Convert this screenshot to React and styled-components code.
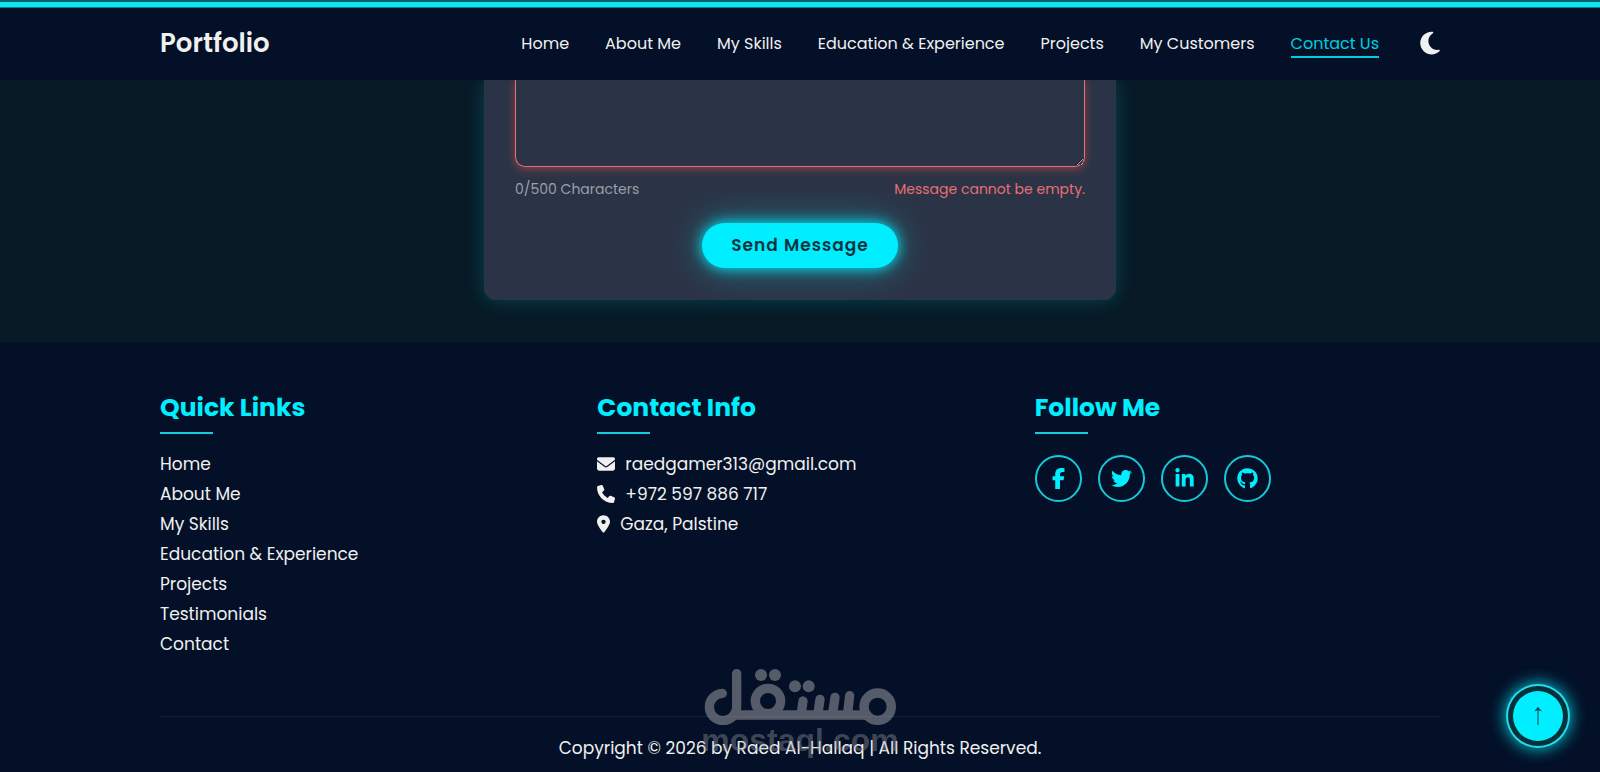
import React, { useState } from 'react'
import styled, { createGlobalStyle, ThemeProvider } from 'styled-components'
import {
  FaEnvelope,
  FaFacebookF,
  FaGithub,
  FaLinkedinIn,
  FaLocationDot,
  FaMoon,
  FaPhone,
  FaTwitter,
} from 'react-icons/fa6'

const theme = {
  primary: '#00eeff',
  bgColor: '#031027',
  sectionColor: '#081a26',
  cardColor: '#2b3446',
  textColor: '#f0f0f0',
  errorColor: '#e86f74',
}

const GlobalStyle = createGlobalStyle`
  * {
    box-sizing: border-box;
  }
  body {
    margin: 0;
    background: ${theme.bgColor};
    color: ${theme.textColor};
    font-family: Poppins, Inter, 'Noto Sans', sans-serif;
  }
  a {
    color: inherit;
    text-decoration: none;
  }
  ul {
    list-style: none;
    margin: 0;
    padding: 0;
  }
`

const Page = styled.div`
  min-height: 100vh;
  display: flex;
  flex-direction: column;
`

const Progress = styled.div`
  position: fixed;
  z-index: 20;
  top: 0;
  left: 0;
  width: 100%;
  height: 8px;
  background: #12e3f2;
  border-top: 2px solid #06616c;
  border-bottom: 1px solid #0a7f8e;
`

const Container = styled.div`
  width: 80%;
  margin: 0 auto;
`

const Header = styled.header`
  position: sticky;
  z-index: 12;
  top: 0;
  padding-top: 6px;
  background: ${props => props.theme.bgColor};
`

const Bar = styled(Container)`
  height: 74px;
  display: flex;
  align-items: center;
  justify-content: space-between;
`

const Logo = styled.a`
  font-size: 26px;
  line-height: 36px;
  font-weight: 600;
`

const Nav = styled.nav`
  display: flex;
  align-items: center;
  gap: 36px;
`

const NavLink = styled.a`
  padding-top: 4px;
  font-size: 16px;
  line-height: 24px;
  border-bottom: 2px solid
    ${props => (props.$active ? props.theme.primary : 'transparent')};
  color: ${props => (props.$active ? props.theme.primary : 'inherit')};
  opacity: ${props => (props.$active ? 0.85 : 1)};
  white-space: nowrap;
`

const ThemeButton = styled.button`
  display: flex;
  margin-left: 5px;
  padding: 0;
  border: 0;
  background: none;
  color: ${props => props.theme.textColor};
  cursor: pointer;
  svg {
    width: 20px;
    height: 26px;
  }
`

const ContactSection = styled.section`
  display: flex;
  justify-content: center;
  padding-bottom: 42px;
  background: ${props => props.theme.sectionColor};
`

const Form = styled.form`
  width: 100%;
  max-width: 632px;
  display: flex;
  flex-direction: column;
  align-items: center;
  padding: 0 31px 32px;
  border-radius: 0 0 12px 12px;
  background: ${props => props.theme.cardColor};
  box-shadow: 0 0 20px rgba(0, 238, 255, 0.2);
`

const Message = styled.textarea`
  display: block;
  width: 100%;
  height: 87px;
  padding: 12px;
  border: 1px solid ${props => props.theme.errorColor};
  border-top: 0;
  border-radius: 0 0 10px 10px;
  outline: none;
  resize: vertical;
  background: transparent;
  color: inherit;
  font: inherit;
  box-shadow: 0 2px 8px rgba(232, 80, 80, 0.5);
`

const FieldInfo = styled.div`
  width: 100%;
  display: flex;
  justify-content: space-between;
  padding: 10px 0 22px;
  font-size: 14px;
  line-height: 24px;
`

const Counter = styled.span`
  color: #9b9fa7;
`

const ErrorText = styled.span`
  color: ${props => props.theme.errorColor};
`

const SendButton = styled.button`
  height: 45px;
  padding: 0 29px 2px;
  border: 0;
  border-radius: 23px;
  background: ${props => props.theme.primary};
  color: #0b3440;
  font: inherit;
  font-size: 17px;
  font-weight: 600;
  letter-spacing: 1px;
  box-shadow: 0 0 14px ${props => props.theme.primary},
    0 0 36px rgba(0, 238, 255, 0.4);
  cursor: pointer;
`

const Footer = styled.footer`
  flex: 1;
  padding: 48px 0 8px;
`

const Columns = styled(Container)`
  display: grid;
  grid-template-columns: repeat(3, 1fr);
  gap: 32px;
  padding-bottom: 57px;
`

const Title = styled.h3`
  margin: 0 0 15px;
  color: ${props => props.theme.primary};
  font-size: 25px;
  line-height: 36px;
  font-weight: 700;
  &::after {
    content: '';
    display: block;
    width: 53px;
    height: 2px;
    margin-top: 6px;
    background: #12cfe0;
  }
`

const Item = styled.li`
  display: flex;
  align-items: center;
  gap: 10px;
  font-size: 17px;
  line-height: 30px;
  svg {
    width: ${props => (props.$narrow ? '13px' : '18px')};
    height: 18px;
  }
`

const Socials = styled.div`
  display: flex;
  gap: 16px;
  padding-top: 6px;
`

const Social = styled.a`
  width: 47px;
  height: 47px;
  display: flex;
  align-items: center;
  justify-content: center;
  border: 2px solid #14c9da;
  border-radius: 50%;
  color: ${props => props.theme.primary};
  font-size: 21px;
`

const Copyright = styled(Container)`
  padding-top: 16px;
  border-top: 1px solid #14203a;
  font-size: 17px;
  line-height: 30px;
  text-align: center;
`

const TopButton = styled.button`
  position: fixed;
  right: 37px;
  bottom: 31px;
  width: 50px;
  height: 50px;
  display: flex;
  align-items: center;
  justify-content: center;
  padding: 0;
  border: 0;
  border-radius: 50%;
  background: ${props => props.theme.primary};
  color: #06434d;
  box-shadow: 0 0 0 5px #06303a, 0 0 0 7px #25dbe9,
    0 0 16px 8px rgba(0, 238, 255, 0.8);
  cursor: pointer;
`

const Watermark = styled.div`
  position: fixed;
  left: 0;
  right: 0;
  bottom: 17px;
  display: flex;
  flex-direction: column;
  align-items: center;
  color: #9a9a9f;
  pointer-events: none;
  svg {
    opacity: 0.55;
  }
`

const WatermarkSite = styled.span`
  font-family: 'Liberation Sans', sans-serif;
  font-size: 32px;
  font-weight: 700;
  line-height: 30px;
  opacity: 0.4;
`

const navLinks = [
  'Home',
  'About Me',
  'My Skills',
  'Education & Experience',
  'Projects',
  'My Customers',
  'Contact Us',
]

const quickLinks = [
  'Home',
  'About Me',
  'My Skills',
  'Education & Experience',
  'Projects',
  'Testimonials',
  'Contact',
]

const socials = [
  { name: 'Facebook', Icon: FaFacebookF },
  { name: 'Twitter', Icon: FaTwitter },
  { name: 'LinkedIn', Icon: FaLinkedinIn },
  { name: 'GitHub', Icon: FaGithub },
]

function MostaqlLogo() {
  return (
    <svg
      width="192"
      height="56"
      viewBox="72 57 576 168"
      role="img"
      aria-label="مستقل"
      fill="none"
      stroke="currentColor"
      strokeWidth="28"
      strokeLinecap="round"
    >
      <path d="M127 130a41 41 0 1 0 43 41V71" />
      <path d="M168 195h388" />
      <circle cx="264" cy="153" r="38" />
      <circle cx="593" cy="170" r="41" />
      <path d="M369 153l-5 37M420 148l-6 42M465 142l-7 48M509 137l-6 53" />
      <g fill="currentColor" stroke="none">
        <circle cx="243" cy="75" r="18" />
        <circle cx="285" cy="75" r="18" />
        <circle cx="345" cy="109" r="18" />
        <circle cx="386" cy="109" r="18" />
      </g>
    </svg>
  )
}

export default function App() {
  const [message, setMessage] = useState('')

  return (
    <ThemeProvider theme={theme}>
      <GlobalStyle />
      <Page>
        <Progress />
        <Header>
          <Bar>
            <Logo href="#home">Portfolio</Logo>
            <Nav>
              {navLinks.map(name => (
                <NavLink href="#" key={name} $active={name === 'Contact Us'}>
                  {name}
                </NavLink>
              ))}
              <ThemeButton type="button" aria-label="Toggle theme">
                <FaMoon />
              </ThemeButton>
            </Nav>
          </Bar>
        </Header>

        <ContactSection>
          <Form onSubmit={e => e.preventDefault()}>
            <Message
              aria-label="Message"
              maxLength={500}
              value={message}
              onChange={e => setMessage(e.target.value)}
            />
            <FieldInfo>
              <Counter>{message.length}/500 Characters</Counter>
              {!message && <ErrorText>Message cannot be empty.</ErrorText>}
            </FieldInfo>
            <SendButton type="submit">Send Message</SendButton>
          </Form>
        </ContactSection>

        <Footer>
          <Columns>
            <div>
              <Title>Quick Links</Title>
              <ul>
                {quickLinks.map(name => (
                  <Item key={name}>
                    <a href="#">{name}</a>
                  </Item>
                ))}
              </ul>
            </div>
            <div>
              <Title>Contact Info</Title>
              <ul>
                <Item>
                  <FaEnvelope />
                  <a href="mailto:raedgamer313@gmail.com">
                    raedgamer313@gmail.com
                  </a>
                </Item>
                <Item>
                  <FaPhone />
                  <a href="tel:+972597886717">+972 597 886 717</a>
                </Item>
                <Item $narrow>
                  <FaLocationDot />
                  Gaza, Palstine
                </Item>
              </ul>
            </div>
            <div>
              <Title>Follow Me</Title>
              <Socials>
                {socials.map(({ name, Icon }) => (
                  <Social href="#" key={name} aria-label={name}>
                    <Icon />
                  </Social>
                ))}
              </Socials>
            </div>
          </Columns>
          <Copyright>
            Copyright © 2026 by Raed Al-Hallaq | All Rights Reserved.
          </Copyright>
        </Footer>

        <Watermark>
          <MostaqlLogo />
          <WatermarkSite>mostaql.com</WatermarkSite>
        </Watermark>

        <TopButton type="button" aria-label="Back to top">
          <svg width="10" height="20" viewBox="0 0 10 20" fill="none">
            <path d="M5 1.5V19" stroke="currentColor" />
            <path d="M1 5.5 5 1l4 4.5-4-1.5z" fill="currentColor" />
          </svg>
        </TopButton>
      </Page>
    </ThemeProvider>
  )
}
